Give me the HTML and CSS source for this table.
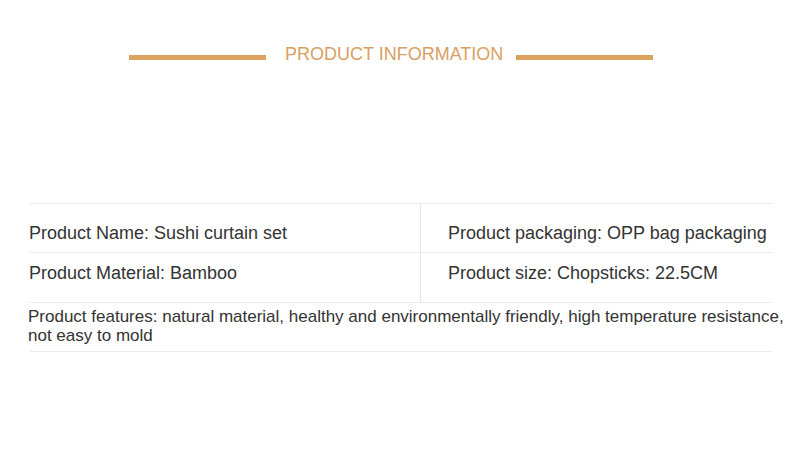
FILE: index.html
```html
<!DOCTYPE html>
<html lang="en">
<head>
<meta charset="utf-8">
<title>Product Information</title>
<link rel="stylesheet" href="styles.css">
</head>
<body>
<div class="page">
  <div class="title-row">
    <span class="bar bar-left"></span>
    <h2 class="title">PRODUCT INFORMATION</h2>
    <span class="bar bar-right"></span>
  </div>
  <div class="spec">
    <div class="spec-grid">
      <div class="cell cell-l row1">Product Name: Sushi curtain set</div>
      <div class="cell cell-r row1">Product packaging: OPP bag packaging</div>
      <div class="cell cell-l row2">Product Material: Bamboo</div>
      <div class="cell cell-r row2">Product size: Chopsticks: 22.5CM</div>
    </div>
    <div class="features">
      <p class="features-text">Product features: natural material, healthy and environmentally friendly, high temperature resistance, not easy to mold</p>
    </div>
  </div>
</div>
</body>
</html>
```
FILE: styles.css
```css
html, body {
  margin: 0;
  padding: 0;
  background: #ffffff;
}
body {
  font-family: "Liberation Sans", Arial, sans-serif;
  color: #333333;
}
.page {
  width: 790px;
  height: 452px;
  overflow: hidden;
}
.title-row {
  display: flex;
  align-items: flex-start;
  padding-top: 44px;
  padding-left: 129px;
}
.bar {
  display: block;
  width: 137px;
  height: 5px;
  margin-top: 11px;
  background: #dca35f;
}
.title {
  margin: 0 13px 0 19px;
  font-size: 18px;
  line-height: 20px;
  font-weight: normal;
  color: #d9a063;
  white-space: nowrap;
}
.spec {
  margin-top: 139px;
  margin-left: 30px;
  width: 742px;
  border-top: 1px solid #ebebeb;
}
.spec-grid {
  display: grid;
  grid-template-columns: 391px 1fr;
}
.cell {
  font-size: 18px;
  line-height: 20px;
  border-bottom: 1px solid #ebebeb;
  white-space: nowrap;
}
.cell-l {
  padding-left: 0;
  margin-left: -1px;
  border-right: 1px solid #e6e6e6;
}
.cell-r {
  padding-left: 27px;
}
.row1 {
  padding-top: 19px;
  padding-bottom: 9px;
}
.row2 {
  padding-top: 10px;
  padding-bottom: 19px;
}
.features {
  border-bottom: 1px solid #ebebeb;
  padding-top: 4px;
  padding-bottom: 6px;
}
.features-text {
  margin: 0 0 0 -2px;
  width: 760px;
  font-size: 17px;
  line-height: 19px;
}
```
